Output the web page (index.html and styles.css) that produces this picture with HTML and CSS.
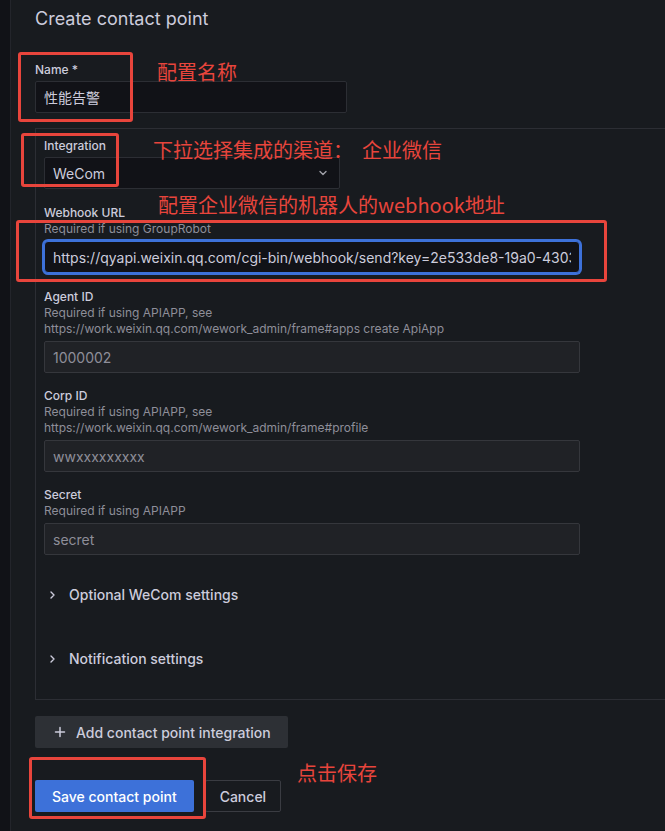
FILE: index.html
```html
<!DOCTYPE html>
<html>
<head>
  <meta charset="utf-8" />
  <meta name="viewport" content="width=device-width" />
  <title>Create contact point</title>
  <link rel="stylesheet" href="styles.css">
</head>

<body>
  <div class="page">
    <div class="side-strip"></div>

    <main class="content">
      <h1 class="page-title">Create contact point</h1>

      <div class="field field-name">
        <label class="field-label" for="cp-name">Name *</label>
        <input id="cp-name" class="text-input name-input" type="text" value="性能告警" readonly />
      </div>

      <section class="integration-box">
        <div class="field">
          <label class="field-label">Integration</label>
          <div class="select-box">
            <span>WeCom</span>
            <svg class="select-caret" width="16" height="16" viewBox="0 0 16 16">
              <path d="M5 6.5 L8 9.5 L11 6.5" fill="none" stroke="#9fa0a8" stroke-width="1.4" stroke-linecap="round" stroke-linejoin="round"/>
            </svg>
          </div>
        </div>

        <div class="field">
          <label class="field-label">Webhook URL</label>
          <div class="field-desc">Required if using GroupRobot</div>
          <input class="text-input wide-input is-focused" type="text" value="https://qyapi.weixin.qq.com/cgi-bin/webhook/send?key=2e533de8-19a0-4303-9c1e" readonly />
        </div>

        <div class="field field-tight">
          <label class="field-label">Agent ID</label>
          <div class="field-desc">Required if using APIAPP, see<br>https://work.weixin.qq.com/wework_admin/frame#apps create ApiApp</div>
          <input class="text-input wide-input muted-input" type="text" placeholder="1000002" readonly />
        </div>

        <div class="field field-tight">
          <label class="field-label">Corp ID</label>
          <div class="field-desc">Required if using APIAPP, see<br>https://work.weixin.qq.com/wework_admin/frame#profile</div>
          <input class="text-input wide-input muted-input" type="text" placeholder="wwxxxxxxxxx" readonly />
        </div>

        <div class="field">
          <label class="field-label">Secret</label>
          <div class="field-desc">Required if using APIAPP</div>
          <input class="text-input wide-input muted-input" type="text" placeholder="secret" readonly />
        </div>

        <div class="collapse-row">
          <svg class="collapse-caret" width="16" height="16" viewBox="0 0 16 16">
            <path d="M7 5 L10 8 L7 11" fill="none" stroke="#ccccdc" stroke-width="1.4" stroke-linecap="round" stroke-linejoin="round"/>
          </svg>
          <span>Optional WeCom settings</span>
        </div>
        <div class="collapse-row">
          <svg class="collapse-caret" width="16" height="16" viewBox="0 0 16 16">
            <path d="M7 5 L10 8 L7 11" fill="none" stroke="#ccccdc" stroke-width="1.4" stroke-linecap="round" stroke-linejoin="round"/>
          </svg>
          <span>Notification settings</span>
        </div>
      </section>

      <button class="btn btn-secondary add-btn" type="button">
        <svg width="16" height="16" viewBox="0 0 16 16">
          <path d="M8 3.5 V12.5 M3.5 8 H12.5" stroke="#ccccdc" stroke-width="1.5" stroke-linecap="round"/>
        </svg>
        <span>Add contact point integration</span>
      </button>

      <div class="form-actions">
        <button class="btn btn-primary" type="button">Save contact point</button>
        <button class="btn btn-outline" type="button">Cancel</button>
      </div>
    </main>

    <!-- red annotations drawn over the screenshot -->
    <div class="mark mark-name"></div>
    <div class="mark mark-integration"></div>
    <div class="mark mark-webhook"></div>
    <div class="mark mark-save"></div>

    <div class="note note-name">配置名称</div>
    <div class="note note-integration">下拉选择集成的渠道：&nbsp;&nbsp;企业微信</div>
    <div class="note note-webhook">配置企业微信的机器人的webhook地址</div>
    <div class="note note-save">点击保存</div>
  </div>
</body>
</html>
```

FILE: styles.css
```css
html, body {
  margin: 0;
  height: 100%;
}

body {
  background-color: #181b1f;
  color: #ccccdc;
  font-family: Inter, "Noto Sans CJK SC", sans-serif;
  font-size: 14px;
  overflow: hidden;
}

.page {
  position: relative;
  display: flex;
  min-height: 100vh;
}

.side-strip {
  width: 10px;
  flex: none;
  background-color: #111217;
  border-right: 1px solid #23252b;
}

.content {
  flex: 1;
  padding: 7px 0 0 24px;
  overflow: hidden;
}

.page-title {
  margin: 0 0 31px;
  font-size: 18px;
  line-height: 24px;
  font-weight: 400;
  color: #ccccdc;
}

/* fields */

.field {
  margin-bottom: 16px;
}

.field-name {
  margin-bottom: 15px;
}

.field-tight {
  margin-bottom: 15px;
}

.field-label {
  display: block;
  font-size: 12px;
  line-height: 16px;
  font-weight: 500;
  color: #ccccdc;
}

.field-desc {
  font-size: 12px;
  line-height: 16px;
  color: #8e8e99;
}

.text-input {
  display: block;
  box-sizing: border-box;
  height: 32px;
  margin-top: 4px;
  padding: 0 8px;
  background-color: #111217;
  border: 1px solid #2c2e34;
  border-radius: 2px;
  color: #ccccdc;
  font-family: Inter, "Noto Sans CJK SC", sans-serif;
  font-size: 14px;
  outline: none;
}

.name-input {
  width: 312px;
  margin-top: 3px;
}

.wide-input {
  width: 536px;
}

.is-focused {
  border-color: #3d71d9;
  box-shadow: 0 0 0 2px #3d71d9;
  border-radius: 4px;
}

.muted-input {
  background-color: #202226;
  border-color: #35373c;
}

.muted-input::placeholder {
  color: #8e8e99;
}

.select-box {
  box-sizing: border-box;
  width: 296px;
  height: 32px;
  margin-top: 3px;
  padding: 0 8px;
  display: flex;
  align-items: center;
  justify-content: space-between;
  background-color: #111217;
  border: 1px solid #2c2e34;
  border-radius: 2px;
  font-size: 14px;
}

/* integration block */

.integration-box {
  width: 640px;
  box-sizing: border-box;
  padding: 9px 8px 0;
  border: 1px solid #2c2e34;
  border-right: none;
}

.collapse-row {
  height: 64px;
  box-sizing: border-box;
  padding-top: 15px;
  display: flex;
  align-items: flex-start;
  gap: 9px;
  font-size: 14px;
  line-height: 18px;
  font-weight: 500;
}

.collapse-caret {
  margin-top: 1px;
}

/* buttons */

.btn {
  box-sizing: border-box;
  height: 32px;
  padding: 0 16px;
  border-radius: 2px;
  border: 1px solid transparent;
  font-family: Inter, sans-serif;
  font-size: 14px;
  font-weight: 500;
  cursor: pointer;
}

.btn-secondary {
  background-color: #2d3035;
  color: #ccccdc;
}

.add-btn {
  margin-top: 16px;
  display: flex;
  align-items: center;
  gap: 8px;
}

.form-actions {
  margin-top: 32px;
  display: flex;
  gap: 11px;
}

.btn-primary {
  background-color: #3d71d9;
  color: #ffffff;
}

.btn-outline {
  background-color: transparent;
  border-color: #3a3c42;
  color: #ccccdc;
  padding: 0 14px;
}

/* annotations */

.mark {
  position: absolute;
  box-sizing: border-box;
  border: 3px solid #e8453c;
  border-radius: 3px;
}

.mark-name {
  left: 18px;
  top: 52px;
  width: 115px;
  height: 70px;
}

.mark-integration {
  left: 21px;
  top: 133px;
  width: 98px;
  height: 54px;
}

.mark-webhook {
  left: 16px;
  top: 220px;
  width: 591px;
  height: 62px;
}

.mark-save {
  left: 29px;
  top: 757px;
  width: 177px;
  height: 62px;
}

.note {
  position: absolute;
  color: #e8453c;
  font-family: "Noto Sans CJK SC", sans-serif;
  font-size: 20px;
  line-height: 20px;
  white-space: nowrap;
}

.note-name {
  left: 157px;
  top: 62px;
}

.note-integration {
  left: 153px;
  top: 140px;
}

.note-webhook {
  left: 158px;
  top: 195px;
}

.note-save {
  left: 297px;
  top: 763px;
}
```
